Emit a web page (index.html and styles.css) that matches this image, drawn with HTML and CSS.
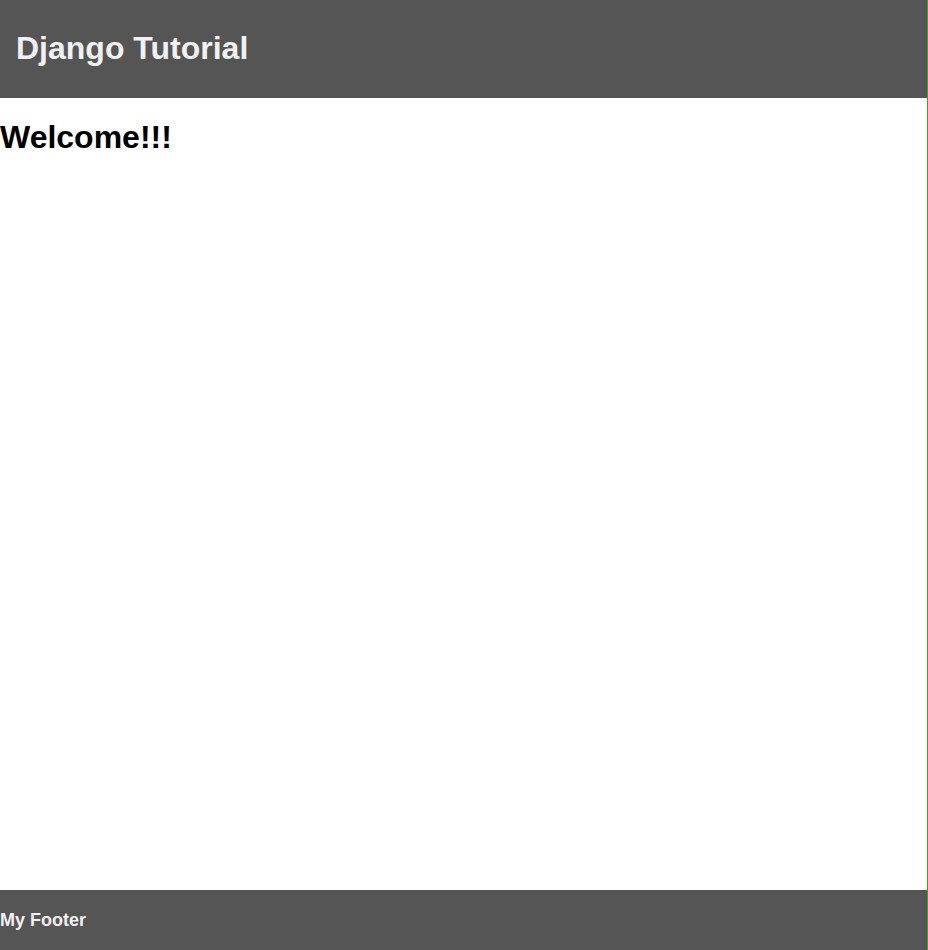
FILE: index.html
```html
<!DOCTYPE html>
<html lang="en">
<head>
<meta charset="utf-8">
<title>Django Tutorial</title>
<link rel="stylesheet" href="styles.css">
</head>
<body>
<div class="page">
  <header class="site-header">
    <h1 class="site-title">Django Tutorial</h1>
  </header>
  <main class="content">
    <h1 class="welcome">Welcome!!!</h1>
  </main>
  <footer class="site-footer">
    <span class="footer-text">My Footer</span>
  </footer>
</div>
</body>
</html>
```

FILE: styles.css
```css
html, body {
  margin: 0;
  padding: 0;
  background: #ffffff;
}

body {
  font-family: "Liberation Sans", Arial, sans-serif;
}

.page {
  display: flex;
  flex-direction: column;
  height: 950px;
  border-right: 1px solid #4d9a25;
  box-sizing: border-box;
}

.site-header {
  background: #555555;
  padding: 9px 16px;
  height: 98px;
  box-sizing: border-box;
}

.site-title {
  margin: 21px 0;
  font-size: 32px;
  font-weight: bold;
  color: #f1f1f1;
  line-height: normal;
}

.content {
  flex: 1;
}

.welcome {
  margin: 21px 0;
  font-size: 32px;
  font-weight: bold;
  color: #000000;
}

.site-footer {
  background: #555555;
  height: 60px;
  display: flex;
  align-items: center;
}

.footer-text {
  font-size: 18px;
  font-weight: bold;
  color: #f1f1f1;
}
```
